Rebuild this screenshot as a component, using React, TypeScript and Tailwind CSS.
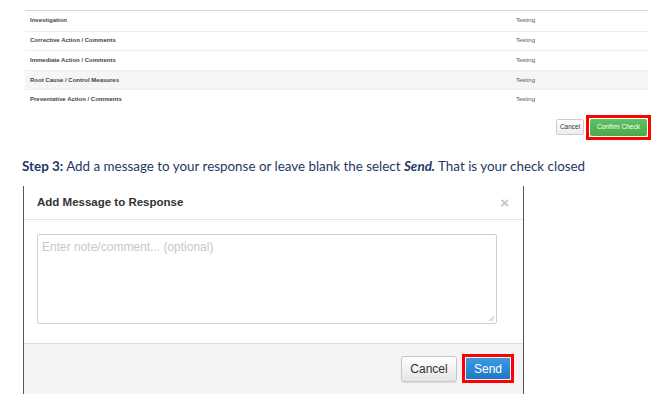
import React from 'react';

const ROWS = [
  { label: 'Investigation', value: 'Testing', shaded: false },
  { label: 'Corrective Action / Comments', value: 'Testing', shaded: false },
  { label: 'Immediate Action / Comments', value: 'Testing', shaded: false },
  { label: 'Root Cause / Control Measures', value: 'Testing', shaded: true },
  { label: 'Preventative Action / Comments', value: 'Testing', shaded: false },
];

const sans = "font-['Liberation_Sans',Arial,sans-serif]";

export default function App() {
  return (
    <div className="w-[658px] h-[413px] bg-white overflow-hidden">
      {/* Response table */}
      <div className="pt-[10px] pl-[25px] pr-[10px]">
        <div className={`border-t border-[#d6d6d6] ${sans}`}>
          {ROWS.map((row, i) => (
            <div
              key={row.label}
              className={`grid grid-cols-[486px_1fr] items-center h-[19.6px] px-[5px] text-[6px] ${
                i > 0 ? 'border-t border-[#eeeeee]' : ''
              } ${row.shaded ? 'bg-[#f5f5f5]' : ''}`}
            >
              <span className="font-bold text-[#444]">{row.label}</span>
              <span className="text-[#555]">{row.value}</span>
            </div>
          ))}
        </div>
      </div>

      {/* Table actions */}
      <div className={`flex justify-end items-center gap-[2px] mt-[6px] pr-[7px] ${sans}`}>
        <button className="w-[28px] h-[16px] rounded-[2px] border border-[#cccccc] bg-gradient-to-b from-white to-[#ececec] text-[6.5px] leading-none text-[#333]">
          Cancel
        </button>
        <div className="flex border-[3px] border-[#ff0000] p-[1px]">
          <button className="w-[57px] h-[17px] rounded-[2px] bg-gradient-to-b from-[#62c162] to-[#49a949] text-[6.5px] leading-none text-white">
            Confirm Check
          </button>
        </div>
      </div>

      {/* Instruction */}
      <p className="mt-[18px] pl-[22px] font-['Lato',sans-serif] text-[13.4px] leading-[17px] text-[#1f3864]">
        <span className="font-bold">Step 3:</span> Add a message to your response or leave blank the select{' '}
        <span className="font-bold italic">Send.</span> That is your check closed
      </p>

      {/* Modal */}
      <div className={`mt-[11px] ml-[23px] w-[501px] h-[208px] border-x border-[#555] flex flex-col ${sans}`}>
        <div className="h-[34px] shrink-0 flex items-center justify-between pl-[13px] pr-[14px] border-b border-[#e5e5e5]">
          <span className="text-[11.5px] font-bold text-[#333]">Add Message to Response</span>
          <span className="text-[15px] font-bold text-[#c4c4c4] leading-none">×</span>
        </div>
        <div className="flex-1 pt-[14px] pl-[13px]">
          <div className="relative w-[460px] h-[90px] rounded-[2px] border border-[#cfcfcf] px-[4px] pt-[3px] text-[12px] text-[#c8c8c8]">
            Enter note/comment... (optional)
            <svg className="absolute right-[1px] bottom-[1px]" width="7" height="7" viewBox="0 0 7 7">
              <path d="M6 1L1 6M6 3.5L3.5 6" stroke="#aaa" strokeWidth="0.8" />
            </svg>
          </div>
        </div>
        <div className="h-[51px] shrink-0 border-t border-[#dddddd] bg-[#f4f4f4] flex items-center justify-end gap-[5px] pr-[9px]">
          <button className="w-[56px] h-[26px] rounded-[3px] border border-[#c8c8c8] bg-gradient-to-b from-white to-[#e4e4e4] text-[12px] leading-none text-[#333] shadow-[0_1px_1px_rgba(0,0,0,0.1)]">
            Cancel
          </button>
          <div className="flex border-[3px] border-[#ff0000] p-[1px]">
            <button className="w-[44px] h-[21px] bg-gradient-to-b from-[#3a9be0] to-[#1f78c4] text-[12px] leading-none text-white">
              Send
            </button>
          </div>
        </div>
      </div>
    </div>
  );
}
